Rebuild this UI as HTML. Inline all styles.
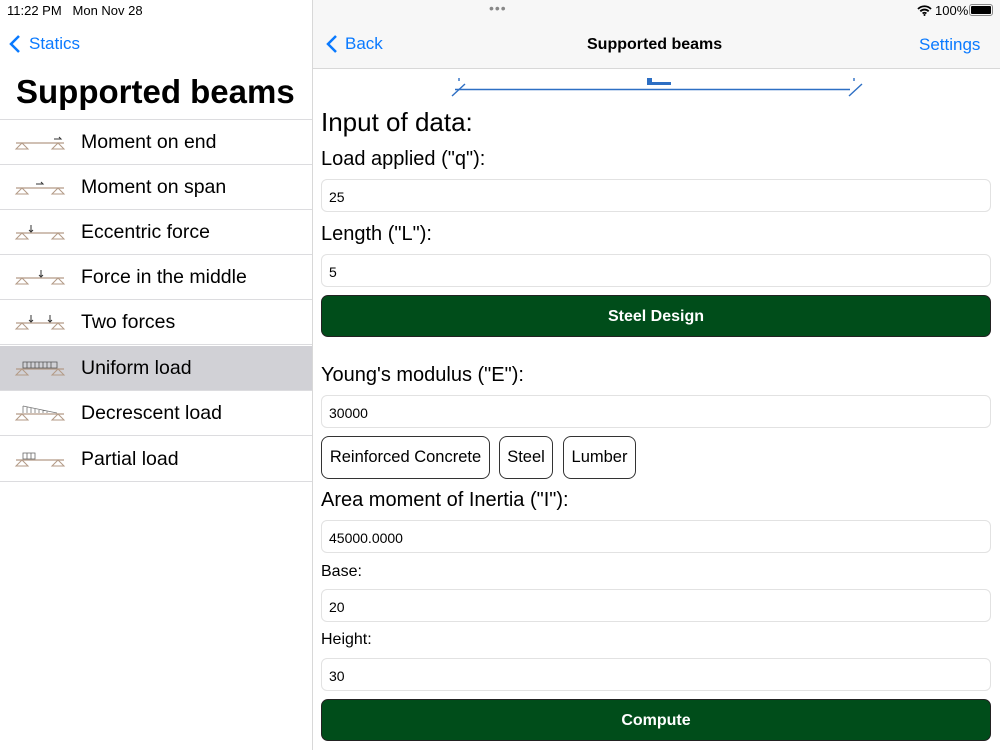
<!DOCTYPE html>
<html><head><meta charset="utf-8"><style>
*{box-sizing:border-box;margin:0;padding:0}
body{width:1000px;height:750px;overflow:hidden;font-family:"Liberation Sans",sans-serif;background:#fff;position:relative;color:#000}
.a{position:absolute}
.blue{color:#0a7aff}
.row{position:absolute;left:0;width:312px;height:45px;border-bottom:1px solid #dcdcdf}
.row span{position:absolute;left:81px;top:11px;font-size:19.5px}
.row svg{position:absolute;left:14px;top:10px}
.lbl{position:absolute;left:321px;font-size:20px}
.fld{position:absolute;left:321px;width:670px;height:33px;border:1px solid #e2e2e2;border-radius:6px;font-size:14px;padding:9px 7px}
.btn{position:absolute;left:321px;width:670px;height:42px;background:#004d1a;border:1px solid #222;border-radius:7px;color:#fff;font-size:16px;font-weight:bold;text-align:center;line-height:42px}
.ob{position:absolute;top:436px;height:43px;border:1px solid #333;border-radius:8px;font-size:16.5px;line-height:41px;padding:0 6px;white-space:nowrap;text-align:center}
</style></head><body>
<div class="a" style="left:313px;top:0;width:687px;height:69px;background:#f7f7f7;border-bottom:1px solid #d8d8d8"></div>
<div class="a" style="left:312px;top:0;width:1px;height:750px;background:#d8d8d8"></div>
<div class="a" style="left:7px;top:3px;font-size:13px">11:22 PM&nbsp;&nbsp;&nbsp;Mon Nov 28</div>
<div class="a" style="left:489px;top:0;font-size:14px;color:#888;letter-spacing:1px">•••</div>
<svg class="a" style="left:917px;top:5px" width="15" height="11" viewBox="0 0 15 11"><path d="M1 4a9 9 0 0 1 13 0M3.3 6.3a6 6 0 0 1 8.4 0M5.6 8.5a3 3 0 0 1 3.8 0" stroke="#000" stroke-width="1.8" fill="none"/><circle cx="7.5" cy="10" r="1" fill="#000"/></svg>
<div class="a" style="left:935px;top:3px;font-size:13px">100%</div>
<div class="a" style="left:969px;top:4px;width:24px;height:12px;border:1px solid #888;border-radius:3px;padding:1px"><div style="background:#000;width:100%;height:100%;border-radius:1px"></div></div>
<svg class="a" style="left:9px;top:35px" width="12" height="18" viewBox="0 0 12 18"><path d="M10 1L2 9l8 8" stroke="#0a7aff" stroke-width="2.5" fill="none"/></svg>
<div class="a blue" style="left:29px;top:34px;font-size:17px">Statics</div>
<svg class="a" style="left:326px;top:35px" width="12" height="18" viewBox="0 0 12 18"><path d="M10 1L2 9l8 8" stroke="#0a7aff" stroke-width="2.5" fill="none"/></svg>
<div class="a blue" style="left:345px;top:34px;font-size:17px">Back</div>
<div class="a" style="left:16px;top:73px;font-size:33px;font-weight:bold">Supported beams</div>
<div class="a" style="left:0;top:119px;width:312px;height:1px;background:#dcdcdf"></div>
<div class="a" style="left:587px;top:36px;font-size:16px;font-weight:bold">Supported beams</div>
<div class="a blue" style="left:919px;top:35px;font-size:17px">Settings</div>

<div class="row" style="top:120px"><svg width="54" height="22"><path d="M2 13h48" stroke="#b39a86" stroke-width="1.2"/><path d="M8 13l-6 6h12zM44 13l-6 6h12z" stroke="#b39a86" fill="none"/><path d="M40 9h7l-2-2" stroke="#333" fill="none"/></svg><span>Moment on end</span></div>
<div class="row" style="top:165px"><svg width="54" height="22"><path d="M2 13h48" stroke="#b39a86" stroke-width="1.2"/><path d="M8 13l-6 6h12zM44 13l-6 6h12z" stroke="#b39a86" fill="none"/><path d="M22 9h7l-2-2" stroke="#333" fill="none"/></svg><span>Moment on span</span></div>
<div class="row" style="top:210px"><svg width="54" height="22"><path d="M2 13h48" stroke="#b39a86" stroke-width="1.2"/><path d="M8 13l-6 6h12zM44 13l-6 6h12z" stroke="#b39a86" fill="none"/><path d="M17 5v7M15 10l2 2 2-2" stroke="#333" fill="none"/></svg><span>Eccentric force</span></div>
<div class="row" style="top:255px"><svg width="54" height="22"><path d="M2 13h48" stroke="#b39a86" stroke-width="1.2"/><path d="M8 13l-6 6h12zM44 13l-6 6h12z" stroke="#b39a86" fill="none"/><path d="M27 5v7M25 10l2 2 2-2" stroke="#333" fill="none"/></svg><span>Force in the middle</span></div>
<div class="row" style="top:300px"><svg width="54" height="22"><path d="M2 13h48" stroke="#b39a86" stroke-width="1.2"/><path d="M8 13l-6 6h12zM44 13l-6 6h12z" stroke="#b39a86" fill="none"/><path d="M17 5v7M15 10l2 2 2-2M36 5v7M34 10l2 2 2-2" stroke="#333" fill="none"/></svg><span>Two forces</span></div>
<div class="row" style="top:346px;background:#d1d1d6"><svg width="54" height="22"><path d="M2 13h48" stroke="#b39a86" stroke-width="1.2"/><path d="M8 13l-6 6h12zM44 13l-6 6h12z" stroke="#b39a86" fill="none"/><path d="M9 6h34v6H9zM13 6v6M17 6v6M21 6v6M25 6v6M29 6v6M33 6v6M37 6v6" stroke="#555" fill="none" stroke-width=".8"/></svg><span>Uniform load</span></div>
<div class="row" style="top:391px"><svg width="54" height="22"><path d="M2 13h48" stroke="#b39a86" stroke-width="1.2"/><path d="M8 13l-6 6h12zM44 13l-6 6h12z" stroke="#b39a86" fill="none"/><path d="M9 5v7M9 5l34 7M13 6v6M17 7v5M21 8v4M25 8v4M29 9v3M33 10v2" stroke="#777" fill="none" stroke-width=".8"/></svg><span>Decrescent load</span></div>
<div class="row" style="top:437px"><svg width="54" height="22"><path d="M2 13h48" stroke="#b39a86" stroke-width="1.2"/><path d="M8 13l-6 6h12zM44 13l-6 6h12z" stroke="#b39a86" fill="none"/><path d="M9 6h12v6H9zM13 6v6M17 6v6" stroke="#666" fill="none" stroke-width=".8"/></svg><span>Partial load</span></div>

<svg class="a" style="left:440px;top:70px" width="440" height="32"><path d="M15 19.5h395" stroke="#2d6fc4" stroke-width="1.6"/><path d="M12 26l13-12M409 26l13-12M19 8v3M414 8v3" stroke="#2d6fc4" stroke-width="1.4"/><path d="M207 8h5v4h19v3h-24z" fill="#2d6fc4"/></svg>

<div class="a" style="left:321px;top:107px;font-size:26px">Input of data:</div>
<div class="lbl" style="top:148px">Load applied ("q"):</div>
<div class="fld" style="top:179px">25</div>
<div class="lbl" style="top:223px">Length ("L"):</div>
<div class="fld" style="top:254px">5</div>
<div class="btn" style="top:295px">Steel Design</div>
<div class="lbl" style="top:364px">Young's modulus ("E"):</div>
<div class="fld" style="top:395px">30000</div>
<div class="ob" style="left:321px;width:169px">Reinforced Concrete</div>
<div class="ob" style="left:499px;width:54px">Steel</div>
<div class="ob" style="left:563px;width:73px">Lumber</div>
<div class="lbl" style="top:489px">Area moment of Inertia ("I"):</div>
<div class="fld" style="top:520px">45000.0000</div>
<div class="a" style="left:321px;top:563px;font-size:16px">Base:</div>
<div class="fld" style="top:589px">20</div>
<div class="a" style="left:321px;top:631px;font-size:16px">Height:</div>
<div class="fld" style="top:658px">30</div>
<div class="btn" style="top:699px">Compute</div>
</body></html>
